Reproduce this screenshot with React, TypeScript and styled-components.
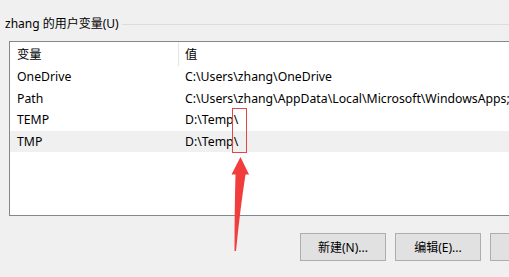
import React from 'react';
import styled, { createGlobalStyle } from 'styled-components';

const GlobalStyle = createGlobalStyle`
  html, body {
    margin: 0;
    padding: 0;
    background: #f0f0f0;
  }
  body {
    font-family: "Noto Sans", "Noto Sans CJK SC", sans-serif;
    font-size: 12px;
    color: #000;
  }
`;

const Page = styled.div`
  position: relative;
  width: 509px;
  height: 277px;
  overflow: hidden;
  background: #f0f0f0;
`;

const GroupHeader = styled.div`
  display: flex;
  align-items: center;
  height: 22px;
  padding: 13px 0 0 5px;
  box-sizing: content-box;
`;

const GroupLabel = styled.span`
  font-size: 12px;
  line-height: 16px;
  white-space: nowrap;
`;

const GroupLine = styled.div`
  flex: 1;
  height: 1px;
  margin-left: 3px;
  background: #dcdcdc;
`;

const ListBox = styled.div`
  margin: 6px 0 0 9px;
  width: 560px;
  height: 175px;
  box-sizing: border-box;
  border: 1px solid #828790;
  background: #fff;
  font-size: 12.25px;
`;

const HeaderRow = styled.div`
  display: grid;
  grid-template-columns: 168px 1fr;
  height: 24px;
  align-items: center;
`;

const HeaderCell = styled.div<{ $divider?: boolean }>`
  height: 100%;
  display: flex;
  align-items: center;
  padding-left: ${p => (p.$divider ? '6px' : '7px')};
  border-left: ${p => (p.$divider ? '1px solid #e5e5e5' : 'none')};
  white-space: nowrap;
`;

const Row = styled.div<{ $selected?: boolean }>`
  display: grid;
  grid-template-columns: 168px 1fr;
  height: 21.5px;
  align-items: center;
  background: ${p => (p.$selected ? '#f0f0f0' : 'transparent')};
`;

const Cell = styled.div`
  padding-left: 7px;
  white-space: nowrap;
  overflow: hidden;
`;

const ButtonRow = styled.div`
  display: flex;
  gap: 9px;
  padding: 17px 0 0 300px;
`;

const Button = styled.div`
  flex: 0 0 auto;
  width: 86px;
  height: 28px;
  box-sizing: border-box;
  border: 1px solid #adadad;
  background: #e1e1e1;
  display: flex;
  align-items: center;
  justify-content: center;
  white-space: nowrap;
`;

const Highlight = styled.div`
  position: absolute;
  left: 232px;
  top: 108px;
  width: 15px;
  height: 45px;
  box-sizing: border-box;
  border: 1px solid #e04848;
`;

const Arrow = styled.svg`
  position: absolute;
  left: 0;
  top: 0;
  pointer-events: none;
`;

const rows = [
  { name: 'OneDrive', value: 'C:\\Users\\zhang\\OneDrive' },
  { name: 'Path', value: 'C:\\Users\\zhang\\AppData\\Local\\Microsoft\\WindowsApps;' },
  { name: 'TEMP', value: 'D:\\Temp\\' },
  { name: 'TMP', value: 'D:\\Temp\\', selected: true },
];

const App = () => {
  return (
    <Page>
      <GlobalStyle />
      <GroupHeader>
        <GroupLabel>zhang 的用户变量(U)</GroupLabel>
        <GroupLine />
      </GroupHeader>

      <ListBox>
        <HeaderRow>
          <HeaderCell>变量</HeaderCell>
          <HeaderCell $divider>值</HeaderCell>
        </HeaderRow>
        {rows.map(r => (
          <Row key={r.name} $selected={r.selected}>
            <Cell>{r.name}</Cell>
            <Cell>{r.value}</Cell>
          </Row>
        ))}
      </ListBox>

      <ButtonRow>
        <Button>新建(N)...</Button>
        <Button>编辑(E)...</Button>
        {/* third button is cut off by the window edge, its label lies outside */}
        <Button />
      </ButtonRow>

      {/* annotation */}
      <Highlight />
      <Arrow width="509" height="277" viewBox="0 0 509 277">
        <path
          d="M240.5 157 L249 174.5 L245.5 174.5 Q240 210 236 251 L234.5 251 Q234.5 210 235.5 174.5 L231.5 174.5 Z"
          fill="#f23d3d"
        />
      </Arrow>
    </Page>
  );
};

export default App;
